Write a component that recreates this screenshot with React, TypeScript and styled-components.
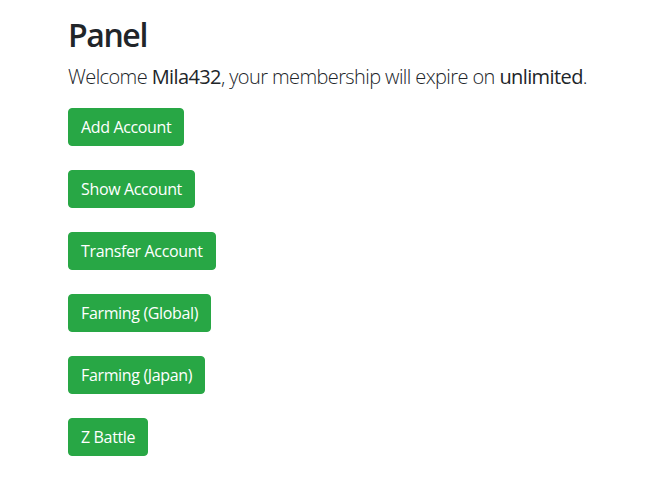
import React from "react";
import styled, { createGlobalStyle } from "styled-components";

const Global = createGlobalStyle`
  html, body { margin: 0; padding: 0; background: #fff; }
  body { font-family: "Open Sans", "Noto Sans", sans-serif; color: #212529; }
`;

const Page = styled.div`
  padding: 16px 0 0 68px;
`;

const Title = styled.h2`
  margin: 0 0 8px;
  font-size: 32px;
  font-weight: 600;
  line-height: 38px;
  color: #212529;
  letter-spacing: -1.4px;
`;

const Lead = styled.p`
  margin: 0 0 16px;
  font-size: 20px;
  font-weight: 300;
  line-height: 30px;
  color: #212529;
  letter-spacing: -0.6px;
`;

const Strong = styled.span`
  font-weight: 400;
`;

const List = styled.div`
  display: flex;
  flex-direction: column;
  align-items: flex-start;
  gap: 24px;
`;

const Button = styled.button`
  font-family: inherit;
  font-size: 16px;
  line-height: 24px;
  padding: 6px 12px;
  border: 1px solid #28a745;
  border-radius: 4px;
  background: #28a745;
  color: #fff;
  cursor: pointer;
  letter-spacing: -0.35px;
`;

const items = [
  "Add Account",
  "Show Account",
  "Transfer Account",
  "Farming (Global)",
  "Farming (Japan)",
  "Z Battle",
];

export default function App() {
  return (
    <>
      <Global />
      <Page>
        <Title>Panel</Title>
        <Lead>
          Welcome <Strong>Mila432</Strong>, your membership will expire on{" "}
          <Strong>unlimited</Strong>.
        </Lead>
        <List>
          {items.map((t) => (
            <Button key={t}>{t}</Button>
          ))}
        </List>
      </Page>
    </>
  );
}
